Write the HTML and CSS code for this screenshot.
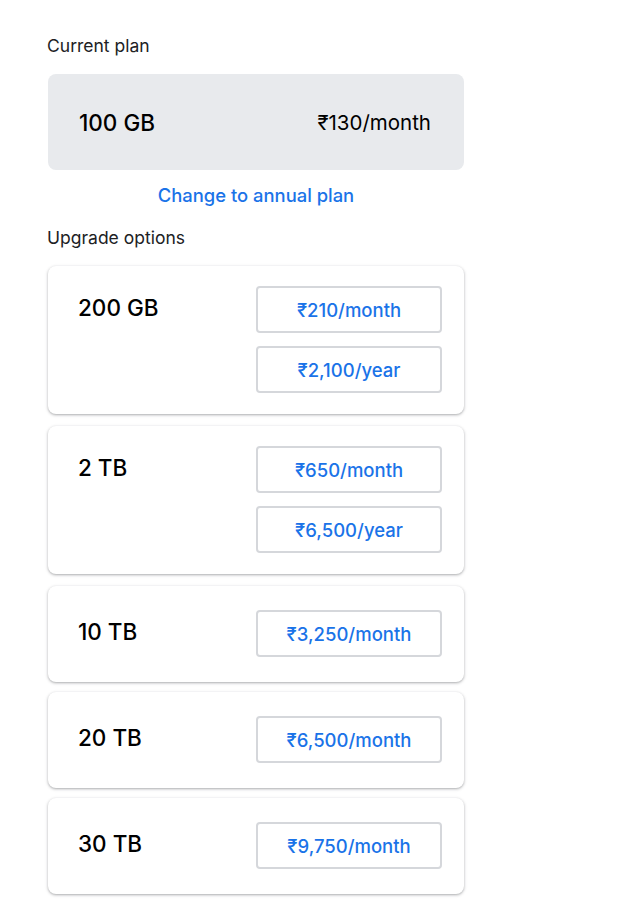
FILE: index.html
```html
<!DOCTYPE html>
<html lang="en">
<head>
    <meta charset="UTF-8">
    <meta name="viewport" content="width=device-width, initial-scale=1.0">
    <title>Storage plans</title>
    <link rel="stylesheet" href="styles.css">
</head>
<body>

    <div class="page">
        <div class="label">Current plan</div>
        <div class="current">
            <span class="current-size">100 GB</span>
            <span class="current-price">₹130/month</span>
        </div>
        <div class="change">
            <a href="#" class="change-link">Change to annual plan</a>
        </div>

        <div class="label upgrade-label">Upgrade options</div>

        <div class="plan double">
            <div class="plan-size">200 GB</div>
            <div class="plan-buttons">
                <button class="price-button">₹210/month</button>
                <button class="price-button">₹2,100/year</button>
            </div>
        </div>
        <div class="plan double">
            <div class="plan-size">2 TB</div>
            <div class="plan-buttons">
                <button class="price-button">₹650/month</button>
                <button class="price-button">₹6,500/year</button>
            </div>
        </div>
        <div class="plan">
            <div class="plan-size">10 TB</div>
            <div class="plan-buttons">
                <button class="price-button">₹3,250/month</button>
            </div>
        </div>
        <div class="plan">
            <div class="plan-size">20 TB</div>
            <div class="plan-buttons">
                <button class="price-button">₹6,500/month</button>
            </div>
        </div>
        <div class="plan">
            <div class="plan-size">30 TB</div>
            <div class="plan-buttons">
                <button class="price-button">₹9,750/month</button>
            </div>
        </div>
    </div>

</body>
</html>
```

FILE: styles.css
```css
body {
    font-family: Inter, "Open Sans", sans-serif;
    margin: 0;
    background-color: #fff;
    color: #202124;
}
.page {
    width: 416px;
    padding: 36px 0 20px 48px;
}
.label {
    font-size: 17.5px;
    line-height: 20px;
    margin-left: -1px;
    margin-bottom: 18px;
}
.upgrade-label {
    margin-top: 20px;
}
.current {
    display: flex;
    justify-content: space-between;
    align-items: center;
    height: 96px;
    box-sizing: border-box;
    padding: 0 33px 0 31px;
    background-color: #e8eaed;
    border-radius: 8px;
    font-size: 20.5px;
    color: #000;
}
.current-size {
    font-size: 22.5px;
    font-weight: 500;
}
.change {
    text-align: center;
    margin-top: 13px;
    line-height: 24px;
}
.change-link {
    color: #1a73e8;
    font-size: 18.4px;
    font-weight: 500;
    text-decoration: none;
}
.plan {
    display: grid;
    grid-template-columns: 1fr 186px;
    align-content: center;
    min-height: 96px;
    box-sizing: border-box;
    padding: 20px 22px 21px 30px;
    margin-bottom: 10px;
    background-color: white;
    border-radius: 8px;
    box-shadow: 0 1px 2px rgba(60, 64, 67, 0.28), 0 1px 3px 1px rgba(60, 64, 67, 0.13);
}
.plan.double {
    margin-bottom: 12px;
}
.plan-size {
    font-size: 22.5px;
    font-weight: 500;
    line-height: 44px;
    color: #000;
}
.plan-buttons {
    display: flex;
    flex-direction: column;
    gap: 13px;
}
.price-button {
    height: 47px;
    background-color: white;
    border: 2px solid #d5d7db;
    border-radius: 4px;
    color: #1a73e8;
    font-family: inherit;
    font-size: 18.5px;
    font-weight: 500;
    cursor: pointer;
}
```
